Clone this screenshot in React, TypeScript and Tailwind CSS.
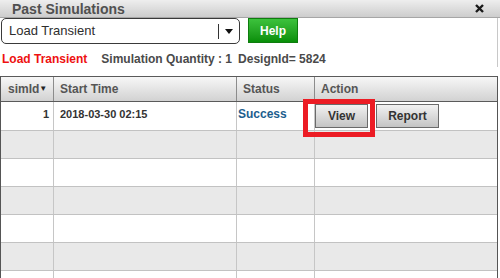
import React from 'react'

const rows = [
  { id: '1', start: '2018-03-30 02:15', status: 'Success' },
  null,
  null,
  null,
  null,
  null,
  null,
]

function HeaderCell({ w, label, last }: { w: string; label: React.ReactNode; last?: boolean }) {
  return (
    <div className={`${w} h-full flex items-center pl-[6px] text-[12px] font-bold text-[#555] ${last ? '' : 'border-r border-[#8c8c8c]'}`}>
      {label}
    </div>
  )
}

export default function App() {
  return (
    <div className="relative w-[500px] h-[278px] overflow-hidden bg-white font-['Liberation_Sans',Arial,sans-serif]">
      {/* title bar */}
      <div className="h-[18px] border-b border-[#a6a6a6] bg-linear-to-b from-[#eeeeee] to-[#cdcdcd] flex items-center justify-between pl-[12px] pr-[16px]">
        <span className="text-[14px] font-bold leading-none text-[#505050]">Past Simulations</span>
        <svg width="9" height="9" viewBox="0 0 9 9" aria-hidden="true">
          <path d="M1 1 L8 8 M8 1 L1 8" stroke="#1a1a1a" strokeWidth="2.4" />
        </svg>
      </div>

      <div className="w-[498px] border-r border-[#c8c8c8]">
        {/* controls */}
        <div className="flex items-start h-[26px]">
          <div className="ml-[1px] w-[239px] h-[26px] border border-[#3a3a3a] rounded-[5px] flex items-center">
            <span className="flex-1 pl-[7px] text-[13px] text-[#2e2e2e]">Load Transient</span>
            <div className="w-px h-[15px] bg-[#333]" />
            <div className="w-[20px] flex justify-center">
              <svg width="8" height="5" viewBox="0 0 8 5" aria-hidden="true">
                <path d="M0 0 H8 L4 5 Z" fill="#111" />
              </svg>
            </div>
          </div>
          <button className="ml-[8px] w-[50px] h-[25px] border border-[#0e7d0e] bg-linear-to-b from-[#3cc23c] to-[#078f07] text-white text-[12px] font-bold">
            Help
          </button>
        </div>

        {/* info line */}
        <div className="mt-[7px] h-[16px] flex items-center text-[12px] font-bold leading-[16px]">
          <span className="ml-[2px] text-[#ee1111]">Load Transient</span>
          <span className="ml-[14px] text-[#4a4a4a]">Simulation Quantity : 1</span>
          <span className="ml-[6px] text-[#4a4a4a]">DesignId= 5824</span>
        </div>
      </div>

      {/* table */}
      <div className="mt-[9px] w-[498px] border-x border-[#555]">
        <div className="h-[26px] border-y border-[#5a5a5a] bg-linear-to-b from-[#f7f7f7] to-[#d2d2d2] flex">
          <div className="w-[53px] h-full flex items-center pl-[7px] text-[12px] font-bold text-[#555] border-r border-[#8c8c8c]">
            simId<span className="text-[8px] text-[#222]">▼</span>
          </div>
          <HeaderCell w="w-[183px]" label="Start Time" />
          <HeaderCell w="w-[78px]" label="Status" />
          <HeaderCell w="flex-1" label="Action" last />
        </div>

        {rows.map((r, i) => (
          <div
            key={i}
            className={`${i === 0 ? 'h-[29px]' : 'h-[28px]'} flex border-b border-[#c2c2c2] ${i % 2 === 1 ? 'bg-[#e9e9e9]' : 'bg-white'}`}
          >
            <div className="w-[53px] h-full border-r border-[#c6c6c6] text-right pr-[4px] pt-[4px] text-[11px] font-bold text-[#333]">
              {r?.id}
            </div>
            <div className="w-[183px] h-full border-r border-[#c6c6c6] pl-[6px] pt-[4px] text-[11px] font-bold text-[#333]">
              {r?.start}
            </div>
            <div className="w-[78px] h-full border-r border-[#c6c6c6] pl-[1px] pt-[3px] text-[12px] font-bold text-[#1c5e8e]">
              {r?.status}
            </div>
            <div className="flex-1 h-full flex items-start pt-[2px] gap-[8px]">
              {r && (
                <>
                  <button className="w-[53px] h-[24px] border border-[#6a6a6a] bg-linear-to-b from-[#f2f2f2] to-[#c4c4c4] text-[12px] font-bold text-[#333]">
                    View
                  </button>
                  <button className="w-[63px] h-[24px] border border-[#6a6a6a] bg-linear-to-b from-[#f2f2f2] to-[#c4c4c4] text-[12px] font-bold text-[#333]">
                    Report
                  </button>
                </>
              )}
            </div>
          </div>
        ))}
      </div>

      {/* highlight annotation */}
      <div className="absolute left-[303px] top-[99px] w-[72px] h-[38px] border-[5px] border-[#ec1c24]" />
    </div>
  )
}
